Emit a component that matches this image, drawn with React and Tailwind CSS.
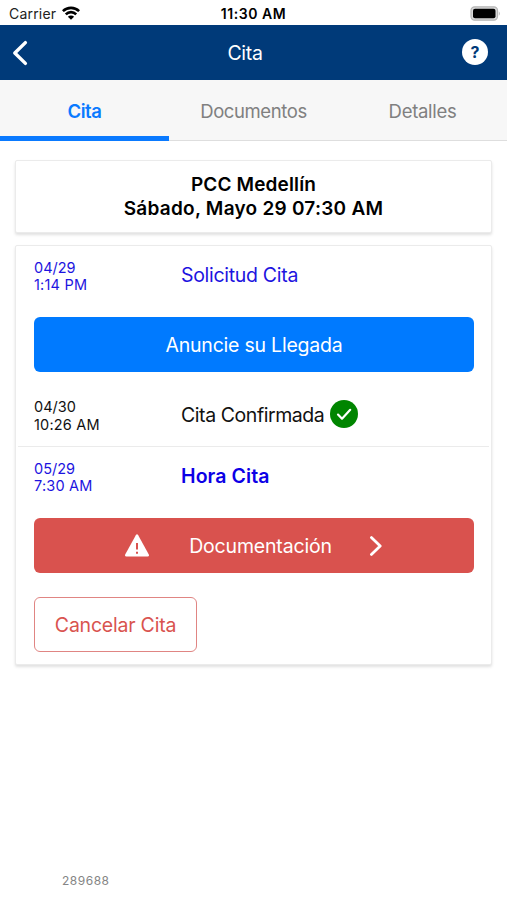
function StatusBar() {
  return (
    <div className="grid h-[25px] grid-cols-3 items-center bg-white text-[14px] leading-none text-[#222]">
      <div className="flex items-center gap-[6px] pl-[9px] pt-[3px]">
        <span className="tracking-[0.2px]">Carrier</span>
        <svg className="mt-[-3px] h-[14px] w-[18px]" viewBox="0 0 18 14" fill="none" stroke="#000" strokeWidth="2.6">
          <path d="M0.9 5.2a11.5 11.5 0 0 1 16.2 0" />
          <path d="M3.8 8.3a7.4 7.4 0 0 1 10.4 0" />
          <path d="M9 13.8 5.9 10.8a4.4 4.4 0 0 1 6.2 0Z" fill="#000" stroke="none" />
        </svg>
      </div>
      <div className="pt-[3px] text-center font-semibold tracking-[0.55px] text-black">11:30 AM</div>
      <div className="flex justify-end pr-[6px] pt-[1px]">
        <svg className="h-[15px] w-[31px]" viewBox="0 0 31 15">
          <rect x="1" y="0.8" width="26.5" height="13.4" rx="3.6" fill="#d9d9d9" stroke="#b5b5b5" strokeWidth="1.2" />
          <rect x="3" y="2.8" width="22.5" height="9.4" rx="2" fill="#000" />
          <path d="M28.8 5.2q2 2.3 0 4.6Z" fill="#b5b5b5" />
        </svg>
      </div>
    </div>
  );
}

function Header() {
  return (
    <header className="flex h-[55px] items-center justify-between bg-[#003a79] pl-[12px] pr-[19px] text-white">
      <svg className="h-[26px] w-[26px]" viewBox="0 0 26 26" fill="none" stroke="currentColor" strokeWidth="3.4" strokeLinecap="round" strokeLinejoin="round">
        <path d="M13.4 2.6 2.8 13 13.4 23.4" />
      </svg>
      <h1 className="mr-[10px] pt-[2px] text-[19.5px] tracking-[-0.3px]">Cita</h1>
      <div className="mt-[-2px] flex size-[26px] items-center justify-center rounded-full bg-white text-[16px] font-bold leading-none text-[#003a79]">
        ?
      </div>
    </header>
  );
}

function Tabs() {
  return (
    <nav className="grid h-[61px] grid-cols-3 bg-[#f7f7f7] pt-[16px] text-center text-[18.5px] leading-[30px] tracking-[-0.4px] text-[#808080]">
      <div className="border-b-[5px] border-[#0a7aff] font-semibold text-[#0a7aff]">Cita</div>
      <div className="border-b border-[#dedede]">Documentos</div>
      <div className="border-b border-[#dedede] tracking-[-0.3px]">Detalles</div>
    </nav>
  );
}

function Event({ date, time, className, children }) {
  return (
    <div className={"flex items-center pl-[18px] " + className}>
      <div className="w-[147px] text-[14.5px] leading-[17.5px]">
        <div>{date}</div>
        <div className="tracking-[0.2px]">{time}</div>
      </div>
      <div className="flex items-center text-[19.5px]">{children}</div>
    </div>
  );
}

export default function App() {
  return (
    <div className="flex h-[900px] w-[507px] flex-col overflow-hidden bg-white font-['Inter',sans-serif]">
      <StatusBar />
      <Header />
      <Tabs />
      <main className="flex flex-col gap-[12px] px-[15px] pt-[19px]">
        <section className="h-[73px] rounded-[2px] border border-[#ebebeb] bg-white pt-[12px] text-center text-[19px] font-semibold leading-[24px] text-black shadow-[0_2px_3px_rgba(0,0,0,0.12)]">
          <div className="tracking-[0.15px]">PCC Medellín</div>
          <div className="tracking-[0.25px]">Sábado, Mayo 29 07:30 AM</div>
        </section>
        <section className="h-[420px] rounded-[2px] border border-[#ebebeb] bg-white shadow-[0_2px_3px_rgba(0,0,0,0.12)]">
          <Event date="04/29" time="1:14 PM" className="h-[60px] text-[#1d14e0]">
            <span className="tracking-[-0.3px]">Solicitud Cita</span>
          </Event>
          <button className="mx-[18px] mt-[11px] block h-[55px] w-[440px] rounded-[6px] bg-[#007aff] pt-[2px] text-[19.5px] tracking-[-0.22px] text-white">
            Anuncie su Llegada
          </button>
          <Event date="04/30" time="10:26 AM" className="mt-[13px] h-[61px] text-[#111]">
            <span className="tracking-[-0.43px]">Cita Confirmada</span>
            <svg className="ml-[6px] mt-[-3px] size-[28px]" viewBox="0 0 28 28">
              <circle cx="14" cy="14" r="14" fill="#008500" />
              <path d="m8 14.6 4 4.1 8.2-8.9" fill="none" stroke="#fff" strokeWidth="2.2" strokeLinecap="round" strokeLinejoin="round" />
            </svg>
          </Event>
          <div className="mx-[2px] h-px bg-[#ebebeb]" />
          <Event date="05/29" time="7:30 AM" className="h-[60px] text-[#1d14e0]">
            <span className="font-semibold tracking-[0.1px] text-[#0c00e6]">Hora Cita</span>
          </Event>
          <button className="mx-[18px] mt-[11px] flex h-[55px] w-[440px] items-center rounded-[6px] bg-[#d9524e] pl-[91px] text-[19.5px] text-white">
            <svg className="h-[23px] w-[24px]" viewBox="0 0 24 23">
              <path d="M10.8 1.2q1.2-1.7 2.4 0L23.8 20.6q.7 1.9-1.2 1.9H1.4q-1.9 0-1.2-1.9Z" fill="#fff" />
              <path d="M12 9v6.4M12 17.7v2.1" stroke="#d9524e" strokeWidth="2" />
            </svg>
            <span className="ml-[40px] w-[143px] pt-[2px] tracking-[-0.17px]">Documentación</span>
            <svg className="ml-[37px] h-[20px] w-[13px]" viewBox="0 0 13 20" fill="none" stroke="#fff" strokeWidth="2.8" strokeLinecap="round" strokeLinejoin="round">
              <path d="m2.4 1.6 8.8 8.4-8.8 8.4" />
            </svg>
          </button>
          <button className="mx-[18px] mt-[24px] block h-[55px] w-[163px] rounded-[6px] border border-[#e08583] pt-[2px] text-[19.5px] tracking-[-0.22px] text-[#d9534f]">
            Cancelar Cita
          </button>
        </section>
      </main>
      <footer className="mb-[12px] mt-auto pl-[62px] text-[12px] leading-[15px] tracking-[0.5px] text-[#858585]">289688</footer>
    </div>
  );
}
